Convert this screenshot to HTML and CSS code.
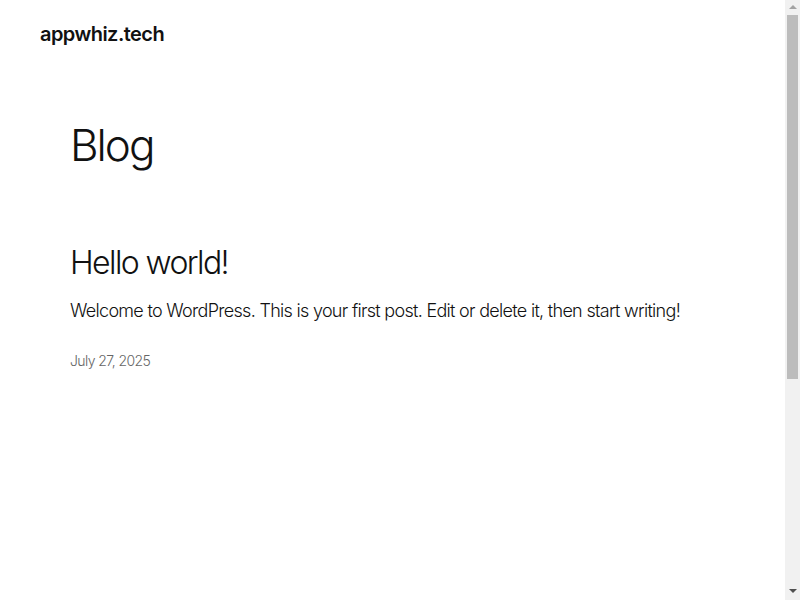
FILE: index.html
```html
<!DOCTYPE html>
<html lang="en">
<head>
    <meta charset="UTF-8">
    <meta name="viewport" content="width=device-width, initial-scale=1.0">
    <title>Blog – appwhiz.tech</title>
    <link rel="stylesheet" href="styles.css">
</head>
<body>
    <header class="site-header">
        <a class="site-title" href="#">appwhiz.tech</a>
    </header>

    <main class="site-main">
        <h1 class="page-title">Blog</h1>

        <article class="post">
            <h2 class="post-title"><a href="#">Hello world!</a></h2>
            <p class="post-excerpt">Welcome to WordPress. This is your first post. Edit or delete it, then start writing!</p>
            <time class="post-date" datetime="2025-07-27">July 27, 2025</time>
        </article>
    </main>

    <footer class="site-footer"></footer>

    <!-- window scrollbar -->
    <div class="scrollbar" aria-hidden="true">
        <span class="scroll-arrow up"></span>
        <span class="scroll-thumb"></span>
        <span class="scroll-rest"></span>
        <span class="scroll-arrow down"></span>
    </div>
</body>
</html>
```

FILE: styles.css
```css
body {
    font-family: Inter, "Noto Sans", sans-serif;
    background: #ffffff;
    color: #111111;
    margin: 0;
    padding-right: 15px;
}

a {
    color: inherit;
    text-decoration: none;
}

.site-header {
    padding: 22px 40px;
}

.site-title {
    font-size: 20px;
    font-weight: 600;
    letter-spacing: -0.55px;
    line-height: 24px;
}

.site-main {
    padding: 0 70px;
}

.page-title {
    font-size: 44px;
    font-weight: 300;
    letter-spacing: -2px;
    line-height: 52px;
    margin: 51px 0 0;
}

.post {
    margin-top: 72px;
}

.post-title {
    font-size: 32px;
    font-weight: 300;
    letter-spacing: -1.6px;
    line-height: 40px;
    margin: 0;
}

.post-excerpt {
    font-size: 18px;
    font-weight: 300;
    letter-spacing: -0.7px;
    line-height: 28px;
    margin: 14px 0 0;
}

.post-date {
    display: block;
    color: #666666;
    font-size: 14px;
    font-weight: 300;
    letter-spacing: -0.6px;
    margin-top: 27px;
}

.site-footer {
    height: 560px;
}

.scrollbar {
    position: fixed;
    top: 0;
    right: 0;
    width: 15px;
    height: 100vh;
    background: #f1f1f1;
    display: flex;
    flex-direction: column;
    align-items: center;
}

.scroll-arrow {
    width: 0;
    height: 0;
    border-left: 4px solid transparent;
    border-right: 4px solid transparent;
}

.scroll-arrow.up {
    border-bottom: 4px solid #a3a3a3;
    margin: 5px 0 6px;
}

.scroll-arrow.down {
    border-top: 4px solid #505050;
    margin: 0 0 7px;
}

.scroll-thumb {
    width: 11px;
    height: 364px;
    background: #bcbcbc;
}

.scroll-rest {
    flex: 1;
}
```
